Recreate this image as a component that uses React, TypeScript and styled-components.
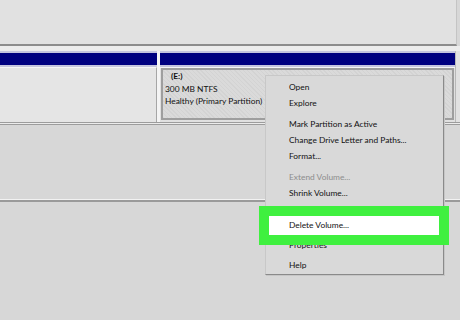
import React from "react";
import styled, { createGlobalStyle } from "styled-components";

const Global = createGlobalStyle`
  html, body { margin: 0; padding: 0; background: #d7d7d7; }
  * { box-sizing: border-box; }
`;

const Screen = styled.div`
  position: relative;
  width: 460px;
  height: 320px;
  overflow: hidden;
  display: flex;
  flex-direction: column;
  background: #d7d7d7;
  font-family: Lato, "Noto Sans", sans-serif;
  font-size: 8.4px;
  color: #111;
`;

const Toolbar = styled.div`
  height: 46px;
  flex: none;
  background: #e1e1e1;
  border-bottom: 2px solid #8c8c8c;
  border-right: 1px solid #c4c4c4;
  margin-right: 3px;
`;

const DiskRow = styled.div`
  flex: none;
  height: 79px;
  display: flex;
  padding-top: 5px;
  background: #ececec;
  border-bottom: 3px double #9c9c9c;
`;

const Partition = styled.div<{ $w?: number }>`
  display: flex;
  flex-direction: column;
  ${(p) => (p.$w ? `width: ${p.$w}px; flex: none;` : `flex: 1;`)}
`;

const PartHeader = styled.div`
  height: 16px;
  flex: none;
  background: #00007f;
  border-top: 2px solid #c5c5de;
  border-bottom: 2px solid #c5c5de;
`;

const PartBody = styled.div<{ $plain?: boolean }>`
  flex: 1;
  border-top: 1px solid #f6f6f6;
  background: ${(p) => (p.$plain ? "#e5e5e5" : "#e0e0e0")};
  ${(p) => (p.$plain ? "border-right: 1px solid #a6a6a6;" : "padding: 0 1px 2px 1px;")}
`;

const Gap = styled.div`
  width: 3px;
  flex: none;
  background: #f4f4f4;
`;

const Selected = styled.div`
  height: 100%;
  border: 2px solid #9e9e9e;
  padding: 0 0 0 2px;
  background: repeating-linear-gradient(
    45deg,
    #d3d3d3 0px,
    #d3d3d3 1px,
    #dadada 1px,
    #dadada 3px
  );
  line-height: 12.5px;
  white-space: nowrap;
`;

const VolName = styled.div`
  font-weight: bold;
  padding-left: 6px;
`;

const RightEdge = styled.div`
  width: 5px;
  flex: none;
  border-left: 1px solid #b8b8b8;
  background: #e1e1e1;
`;

const Spacer = styled.div`
  height: 74px;
  flex: none;
`;

const Rule = styled.div`
  flex: none;
  border-top: 1px solid #f2f2f2;
  border-bottom: 2px solid #9a9a9a;
`;

const Menu = styled.div`
  position: absolute;
  left: 265px;
  top: 75px;
  width: 179px;
  padding: 3px 0 1px;
  background: #d9d9d9;
  border: 1px solid #c8c8c8;
  border-right-color: #8a8a8a;
  border-bottom-color: #8a8a8a;
  box-shadow: 1px 1px 0 #c6c6c6;
`;

const Item = styled.div<{ $disabled?: boolean }>`
  height: 16px;
  line-height: 16px;
  padding-left: 23px;
  white-space: nowrap;
  color: ${(p) => (p.$disabled ? "#8d8d8d" : "#111")};
`;

const HighlightItem = styled.div`
  position: relative;
  z-index: 1;
  height: 19px;
  line-height: 19px;
  margin: -1.5px 4px -1.5px 3px;
  padding-left: 20px;
  background: #ffffff;
  box-shadow: 0 0 0 10px #3ff03f;
  white-space: nowrap;
`;

const Sep = styled.div<{ $h?: number }>`
  height: ${(p) => p.$h ?? 5}px;
`;

export default function App() {
  return (
    <Screen>
      <Global />
      <Toolbar />
      <DiskRow>
        <Partition $w={157}>
          <PartHeader />
          <PartBody $plain />
        </Partition>
        <Gap />
        <Partition>
          <PartHeader />
          <PartBody>
            <Selected>
              <VolName>(E:)</VolName>
              <div>300 MB NTFS</div>
              <div>Healthy (Primary Partition)</div>
            </Selected>
          </PartBody>
        </Partition>
        <RightEdge />
      </DiskRow>
      <Spacer />
      <Rule />
      <Menu>
        <Item>Open</Item>
        <Item>Explore</Item>
        <Sep />
        <Item>Mark Partition as Active</Item>
        <Item>Change Drive Letter and Paths...</Item>
        <Item>Format...</Item>
        <Sep />
        <Item $disabled>Extend Volume...</Item>
        <Item>Shrink Volume...</Item>
        <Item $disabled>Add Mirror...</Item>
        <HighlightItem>Delete Volume...</HighlightItem>
        <Sep $h={4} />
        <Item>Properties</Item>
        <Sep $h={4} />
        <Item>Help</Item>
      </Menu>
    </Screen>
  );
}
